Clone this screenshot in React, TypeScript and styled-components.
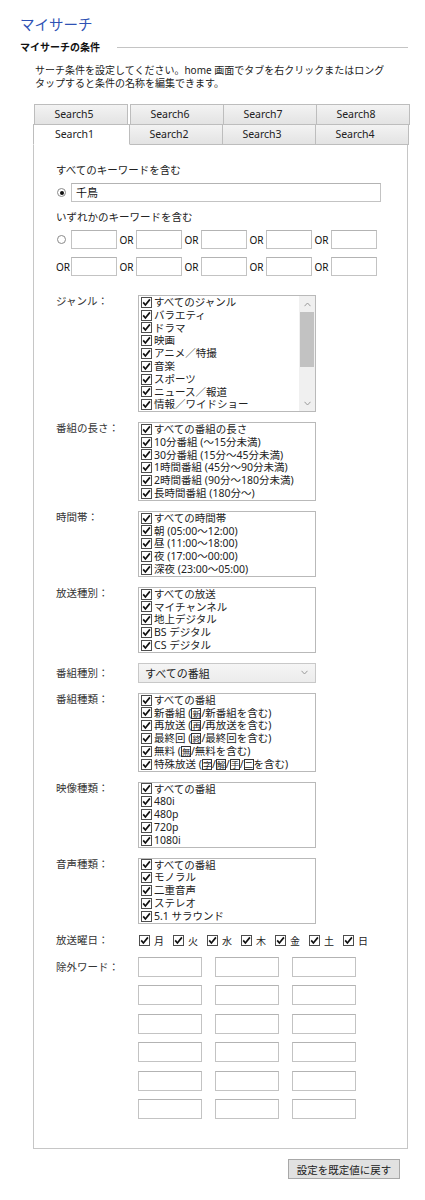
import React from "react";
import styled, { createGlobalStyle } from "styled-components";

const GlobalStyle = createGlobalStyle`
  html, body {
    margin: 0;
    padding: 0;
    background: #fff;
  }
  body {
    font-family: "Noto Sans", "Noto Sans CJK JP", sans-serif;
    color: #222;
    font-size: 10.5px;
  }
`;

const Page = styled.div`
  width: 425px;
  box-sizing: border-box;
  padding: 14px 17px 20px 20px;
`;

const Title = styled.h1`
  margin: 0;
  font-size: 14.5px;
  font-weight: normal;
  line-height: 20px;
  color: #2f52b4;
`;

const SectionHead = styled.h2`
  display: flex;
  align-items: center;
  gap: 17px;
  margin: 6px 0 0;
  font-size: 10px;
  font-weight: bold;
  line-height: 14px;
  color: #111;

  &::after {
    content: "";
    flex: 1;
    height: 1px;
    background: #c4c4c4;
  }
`;

const Note = styled.p`
  margin: 10px 0 0 15px;
  font-size: 10px;
  line-height: 13px;
  color: #222;
`;

const Tabbed = styled.div`
  margin: 14px 0 0 13px;
`;

const TabRow = styled.div<{ $inset?: boolean }>`
  display: grid;
  grid-template-columns: 96px 93px 93px 93px;
  padding-left: ${(p) => (p.$inset ? "1px" : "0")};
`;

const Tab = styled.div<{ $active?: boolean }>`
  position: relative;
  z-index: ${(p) => (p.$active ? 2 : 1)};
  height: 21px;
  box-sizing: border-box;
  margin: 0 -1px -1px 0;
  padding-right: 14px;
  border: 1px solid #bdbdbd;
  border-bottom-color: ${(p) => (p.$active ? "#fff" : "#bdbdbd")};
  background: ${(p) =>
    p.$active ? "#fff" : "linear-gradient(#f3f3f3, #e3e3e3)"};
  font-size: 10.5px;
  line-height: 18px;
  text-align: center;
  color: #222;
`;

const Panel = styled.div`
  border: 1px solid #c6c6c6;
  padding: 18px 10px 29px 22px;
`;

const Caption = styled.div`
  font-size: 10.5px;
  line-height: 14px;
  margin-bottom: 6px;
  color: #222;
`;

const KeywordRow = styled.div`
  display: flex;
  align-items: center;
  margin-bottom: 8px;
`;

const Lead = styled.div`
  width: 15px;
  flex: none;
  display: flex;
  align-items: center;
`;

const Radio = styled.span<{ $on?: boolean }>`
  display: inline-flex;
  align-items: center;
  justify-content: center;
  width: 9px;
  height: 9px;
  margin-left: 1px;
  box-sizing: border-box;
  border: 1px solid #8a8a8a;
  border-radius: 50%;
  background: #fff;

  &::after {
    content: "";
    width: 4px;
    height: 4px;
    border-radius: 50%;
    background: ${(p) => (p.$on ? "#111" : "transparent")};
  }
`;

const TextBox = styled.div<{ $w: number; $h?: number }>`
  width: ${(p) => p.$w}px;
  height: ${(p) => p.$h ?? 19}px;
  box-sizing: border-box;
  flex: none;
  border: 1px solid #c3c3c3;
  border-top-color: #b3b3b3;
  background: #fff;
  padding-left: 4px;
  font-size: 11px;
  line-height: ${(p) => (p.$h ?? 19) - 2}px;
  color: #111;
`;

const Or = styled.span<{ $lead?: boolean }>`
  width: ${(p) => (p.$lead ? "15px" : "19px")};
  flex: none;
  text-align: ${(p) => (p.$lead ? "left" : "center")};
  font-size: 10px;
  font-weight: normal;
  color: #111;
`;

const Fields = styled.div`
  display: grid;
  grid-template-columns: 82px 1fr;
  row-gap: 10px;
  margin-top: 19px;
`;

const Label = styled.div`
  font-size: 10.5px;
  line-height: 13px;
  color: #333;
`;

const ListBox = styled.div<{ $h?: number }>`
  width: 178px;
  box-sizing: border-box;
  border: 1px solid #b9b9b9;
  background: #fff;
  display: flex;
  height: ${(p) => (p.$h ? `${p.$h}px` : "auto")};
  overflow: hidden;
`;

const Items = styled.div`
  flex: 1;
  min-width: 0;
`;

const Item = styled.div`
  display: flex;
  align-items: center;
  gap: 2px;
  height: 12.8px;
  padding-left: 2px;
  white-space: nowrap;
  font-size: 10.5px;
  line-height: 12.8px;
  color: #222;
`;

const Scrollbar = styled.div`
  width: 16px;
  flex: none;
  display: flex;
  flex-direction: column;
  background: #f0f0f0;
`;

const ScrollArrow = styled.div`
  height: 16px;
  display: flex;
  align-items: center;
  justify-content: center;
`;

const Thumb = styled.div`
  height: 55px;
  margin: 0 1px;
  background: #c2c2c2;
`;

const Track = styled.div`
  flex: 1;
`;

const Mark = styled.span`
  display: inline-block;
  width: 10px;
  height: 11px;
  box-sizing: border-box;
  border: 1px solid #333;
  font-size: 8.5px;
  line-height: 9px;
  text-align: center;
  vertical-align: -2px;
  overflow: hidden;
`;

const SelectBox = styled.div`
  width: 178px;
  height: 20px;
  box-sizing: border-box;
  border: 1px solid #c8c8c8;
  background: linear-gradient(#f5f5f5, #ececec);
  display: flex;
  align-items: center;
  justify-content: space-between;
  padding: 0 7px 0 6px;
  font-size: 11px;
  color: #222;
`;

const Week = styled.div`
  display: flex;
  align-items: center;
  gap: 9px;
  height: 13px;
  padding-left: 1px;
`;

const Day = styled.div`
  display: flex;
  align-items: center;
  gap: 4px;
  font-size: 10px;
  color: #222;
`;

const ExcludeGrid = styled.div`
  display: grid;
  grid-template-columns: repeat(3, 64px);
  column-gap: 13px;
  row-gap: 8.5px;
`;

const Footer = styled.div`
  display: flex;
  justify-content: flex-end;
  margin: 10px 8px 0 0;
`;

const Button = styled.button`
  width: 112px;
  height: 20px;
  padding: 0;
  border: 1px solid #a8a8a8;
  background: #e1e1e1;
  font-family: "Noto Sans CJK JP", sans-serif;
  font-size: 10.5px;
  color: #222;
`;

const Check = () => (
  <svg width="11" height="11" viewBox="0 0 11 11" style={{ flex: "none" }}>
    <rect x="0.5" y="0.5" width="10" height="10" fill="#fff" stroke="#4d4d4d" />
    <path d="M2.2 5.4 L4.4 8 L8.9 2.4" fill="none" stroke="#111" strokeWidth="1.7" />
  </svg>
);

const Chevron = ({ up }: { up?: boolean }) => (
  <svg width="7" height="5" viewBox="0 0 7 5">
    <path
      d={up ? "M0.5 4.2 L3.5 1 L6.5 4.2" : "M0.5 0.8 L3.5 4 L6.5 0.8"}
      fill="none"
      stroke="#9a9a9a"
      strokeWidth="1"
    />
  </svg>
);

const CheckList = ({ items }: { items: React.ReactNode[] }) => (
  <ListBox>
    <Items>
      {items.map((it, i) => (
        <Item key={i}>
          <Check />
          <span>{it}</span>
        </Item>
      ))}
    </Items>
  </ListBox>
);

const genres = [
  "すべてのジャンル",
  "バラエティ",
  "ドラマ",
  "映画",
  "アニメ／特撮",
  "音楽",
  "スポーツ",
  "ニュース／報道",
  "情報／ワイドショー",
];

const lengths = [
  "すべての番組の長さ",
  "10分番組 (〜15分未満)",
  "30分番組 (15分〜45分未満)",
  "1時間番組 (45分〜90分未満)",
  "2時間番組 (90分〜180分未満)",
  "長時間番組 (180分〜)",
];

const slots = [
  "すべての時間帯",
  "朝 (05:00〜12:00)",
  "昼 (11:00〜18:00)",
  "夜 (17:00〜00:00)",
  "深夜 (23:00〜05:00)",
];

const networks = ["すべての放送", "マイチャンネル", "地上デジタル", "BS デジタル", "CS デジタル"];

const kinds: React.ReactNode[] = [
  "すべての番組",
  <>新番組 (<Mark>新</Mark>/新番組を含む)</>,
  <>再放送 (<Mark>再</Mark>/再放送を含む)</>,
  <>最終回 (<Mark>終</Mark>/最終回を含む)</>,
  <>無料 (<Mark>無</Mark>/無料を含む)</>,
  <>
    特殊放送 (<Mark>字</Mark>/<Mark>解</Mark>/<Mark>手</Mark>/<Mark>二</Mark>を含む)
  </>,
];

const videos = ["すべての番組", "480i", "480p", "720p", "1080i"];
const audios = ["すべての番組", "モノラル", "二重音声", "ステレオ", "5.1 サラウンド"];
const days = ["月", "火", "水", "木", "金", "土", "日"];

const App = () => {
  return (
    <Page>
      <GlobalStyle />
      <Title>マイサーチ</Title>
      <SectionHead>マイサーチの条件</SectionHead>
      <Note>
        サーチ条件を設定してください。home 画面でタブを右クリックまたはロング
        <br />
        タップすると条件の名称を編集できます。
      </Note>

      <Tabbed>
        <TabRow $inset>
          {["Search5", "Search6", "Search7", "Search8"].map((t, i) => (
            <Tab key={t} style={i === 0 ? { width: 94 } : undefined}>
              {t}
            </Tab>
          ))}
        </TabRow>
        <TabRow>
          {["Search1", "Search2", "Search3", "Search4"].map((t, i) => (
            <Tab key={t} $active={i === 0}>
              {t}
            </Tab>
          ))}
        </TabRow>

        <Panel>
          <Caption>すべてのキーワードを含む</Caption>
          <KeywordRow>
            <Lead>
              <Radio $on />
            </Lead>
            <TextBox $w={310}>千鳥</TextBox>
          </KeywordRow>

          <Caption>いずれかのキーワードを含む</Caption>
          {[0, 1].map((row) => (
            <KeywordRow key={row}>
              {row === 0 ? (
                <Lead>
                  <Radio />
                </Lead>
              ) : (
                <Or $lead>OR</Or>
              )}
              {[0, 1, 2, 3, 4].map((n) => (
                <React.Fragment key={n}>
                  {n > 0 && <Or>OR</Or>}
                  <TextBox $w={46} />
                </React.Fragment>
              ))}
            </KeywordRow>
          ))}

          <Fields>
            <Label>ジャンル：</Label>
            <ListBox $h={117}>
              <Items>
                {genres.map((g) => (
                  <Item key={g}>
                    <Check />
                    <span>{g}</span>
                  </Item>
                ))}
              </Items>
              <Scrollbar>
                <ScrollArrow>
                  <Chevron up />
                </ScrollArrow>
                <Thumb />
                <Track />
                <ScrollArrow>
                  <Chevron />
                </ScrollArrow>
              </Scrollbar>
            </ListBox>

            <Label>番組の長さ：</Label>
            <CheckList items={lengths} />

            <Label>時間帯：</Label>
            <CheckList items={slots} />

            <Label>放送種別：</Label>
            <CheckList items={networks} />

            <Label style={{ lineHeight: "20px" }}>番組種別：</Label>
            <SelectBox>
              <span>すべての番組</span>
              <Chevron />
            </SelectBox>

            <Label>番組種類：</Label>
            <CheckList items={kinds} />

            <Label>映像種類：</Label>
            <CheckList items={videos} />

            <Label>音声種類：</Label>
            <CheckList items={audios} />

            <Label>放送曜日：</Label>
            <Week>
              {days.map((d) => (
                <Day key={d}>
                  <Check />
                  <span>{d}</span>
                </Day>
              ))}
            </Week>

            <Label style={{ lineHeight: "20px" }}>除外ワード：</Label>
            <ExcludeGrid>
              {Array.from({ length: 18 }).map((_, i) => (
                <TextBox key={i} $w={64} $h={20} />
              ))}
            </ExcludeGrid>
          </Fields>
        </Panel>
      </Tabbed>

      <Footer>
        <Button>設定を既定値に戻す</Button>
      </Footer>
    </Page>
  );
};

export default App;
